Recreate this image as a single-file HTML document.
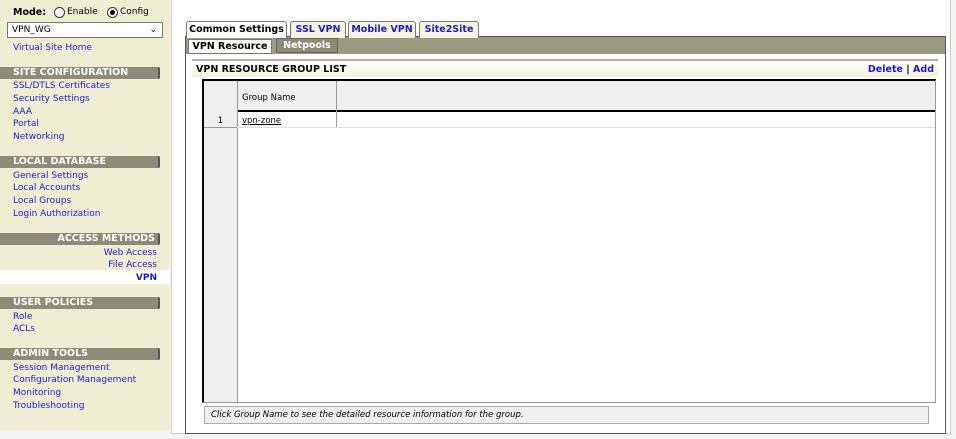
<!DOCTYPE html>
<html><head><style>
*{margin:0;padding:0;box-sizing:border-box}
body{width:956px;height:439px;background:#f4f4f4;font-family:"DejaVu Sans",Verdana,sans-serif;font-size:9px;position:relative;overflow:hidden;color:#000}
.a{position:absolute}
.lnk{color:#1a1acc;position:absolute;left:13px;white-space:nowrap}
.hdr{position:absolute;left:0;width:160px;height:12px;background:#8e8c78;color:#fff;font-weight:bold;padding-left:13px;line-height:12px;border-right:2px solid #555;border-radius:0 2px 2px 0;font-size:9.5px}
.tab{position:absolute;height:17px;border:1px solid #777;border-bottom:none;background:#f5f5dc;font-weight:bold;color:#1a1acc;line-height:16px;text-align:center;border-radius:3px 3px 0 0;font-size:9.5px}
</style></head><body>
<div class="a" style="left:0;top:0;width:170px;height:270px;background:#f0eed2;border-radius:0 0 6px 0"></div>
<div class="a" style="left:0;top:270px;width:170px;height:14px;background:#fff"></div>
<div class="a" style="left:0;top:284px;width:170px;height:147px;background:#f0eed2;border-radius:0 6px 0 0"></div>
<div class="a" style="left:13px;top:7px;font-weight:bold;font-size:9.5px">Mode:</div>
<div class="a" style="left:54px;top:7px;width:11px;height:11px;border:1px solid #333;border-radius:50%;background:#fff"></div>
<div class="a" style="left:67px;top:7px">Enable</div>
<div class="a" style="left:107px;top:7px;width:11px;height:11px;border:1px solid #333;border-radius:50%;background:#fff"></div>
<div class="a" style="left:110px;top:10px;width:5px;height:5px;border-radius:50%;background:#000"></div>
<div class="a" style="left:120px;top:7px">Config</div>
<div class="a" style="left:7px;top:22px;width:156px;height:16px;border:1px solid #777;background:#fff;padding-left:4px;line-height:14px">VPN_WG<span style="position:absolute;right:5px;top:0;font-size:9px">⌄</span></div>
<div class="lnk" style="top:43px">Virtual Site Home</div>
<div class="hdr" style="top:67px">SITE CONFIGURATION</div>
<div class="lnk" style="top:81px">SSL/DTLS Certificates</div>
<div class="lnk" style="top:94px">Security Settings</div>
<div class="lnk" style="top:107px">AAA</div>
<div class="lnk" style="top:119px">Portal</div>
<div class="lnk" style="top:132px">Networking</div>
<div class="hdr" style="top:156px">LOCAL DATABASE</div>
<div class="lnk" style="top:171px">General Settings</div>
<div class="lnk" style="top:183px">Local Accounts</div>
<div class="lnk" style="top:196px">Local Groups</div>
<div class="lnk" style="top:209px">Login Authorization</div>
<div class="hdr" style="top:233px;text-align:right;padding-right:3px">ACCESS METHODS</div>
<div class="lnk" style="top:248px;left:auto;right:799px">Web Access</div>
<div class="lnk" style="top:260px;left:auto;right:799px">File Access</div>
<div class="lnk" style="top:273px;left:auto;right:799px;font-weight:bold">VPN</div>
<div class="hdr" style="top:297px">USER POLICIES</div>
<div class="lnk" style="top:312px">Role</div>
<div class="lnk" style="top:324px">ACLs</div>
<div class="hdr" style="top:348px">ADMIN TOOLS</div>
<div class="lnk" style="top:363px">Session Management</div>
<div class="lnk" style="top:375px">Configuration Management</div>
<div class="lnk" style="top:388px">Monitoring</div>
<div class="lnk" style="top:401px">Troubleshooting</div>

<div class="a" style="left:171px;top:0;width:780px;height:434px;background:#fff;border-left:1px solid #ccc;border-right:1px solid #ccc;border-bottom:1px solid #ccc"></div>
<div class="a" style="left:185px;top:36px;width:761px;height:398px;background:#fff;border:1px solid #555"></div>
<div class="a" style="left:185px;top:36px;width:761px;height:18px;background:#9b9a82;border:1px solid #555;border-bottom:none"></div>
<div class="tab" style="left:186px;top:21px;width:101px;height:17px;background:#fff;color:#000">Common Settings</div>
<div class="tab" style="left:290px;top:21px;width:56px">SSL VPN</div>
<div class="tab" style="left:348px;top:21px;width:68px">Mobile VPN</div>
<div class="tab" style="left:419px;top:21px;width:60px">Site2Site</div>
<div class="a" style="left:188px;top:39px;width:84px;height:15px;background:#fff;border:1px solid #777;font-weight:bold;text-align:center;line-height:14px;font-size:9.5px">VPN Resource</div>
<div class="a" style="left:276px;top:38px;width:62px;height:15px;background:#8e8c78;border:1px solid #666;color:#fff;font-weight:bold;text-align:center;line-height:13px;font-size:9.5px">Netpools</div>
<div class="a" style="left:192px;top:59px;width:746px;height:18px;background:linear-gradient(#fff,#f3f2d8);border-top:2px solid #b8ada0;font-weight:bold;line-height:17px;padding-left:4px;font-size:9.5px">VPN RESOURCE GROUP LIST<span style="position:absolute;right:4px;color:#1a1acc">Delete <span style="color:#000">|</span> Add</span></div>
<div class="a" style="left:202px;top:79px;width:734px;height:324px;border:1px solid #999;border-left:2px solid #000;border-top:2px solid #000;background:#fff"></div>
<div class="a" style="left:204px;top:81px;width:731px;height:31px;background:#efefef;border-bottom:2px solid #000"></div>
<div class="a" style="left:204px;top:81px;width:34px;height:321px;background:#efefef;border-right:1px solid #999"></div>
<div class="a" style="left:336px;top:81px;width:1px;height:47px;background:#999"></div>
<div class="a" style="left:242px;top:93px;font-size:8.5px">Group Name</div>
<div class="a" style="left:204px;top:114px;width:731px;height:14px;border-bottom:1px solid #ddd"></div>
<div class="a" style="left:204px;top:114px;width:33px;height:14px;background:#efefef;border-bottom:1px solid #999;text-align:center;font-size:8.5px;line-height:15px">1</div>
<div class="a" style="left:242px;top:116px;font-size:8.5px;text-decoration:underline">vpn-zone</div>
<div class="a" style="left:204px;top:406px;width:725px;height:18px;background:#efefef;border:1px solid #aaa;font-style:italic;font-size:8.5px;line-height:17px;padding-left:6px">Click Group Name to see the detailed resource information for the group.</div>
</body></html>
